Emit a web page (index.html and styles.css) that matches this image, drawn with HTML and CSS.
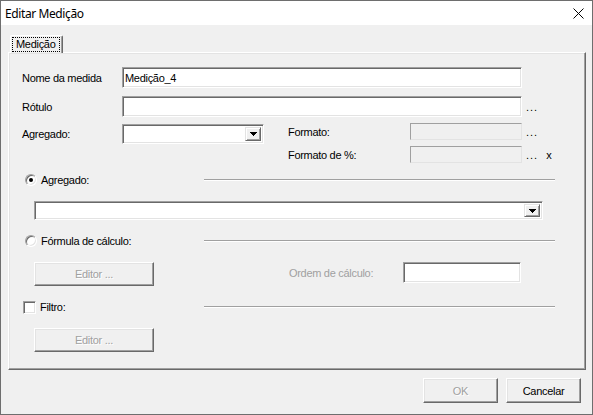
FILE: index.html
```html
<!DOCTYPE html>
<html lang="pt">
<head>
<meta charset="utf-8">
<title>Editar Medição</title>
<link rel="stylesheet" href="styles.css">
</head>
<body>
<div class="window">
  <div class="titlebar">
    <span class="title">Editar Medição</span>
    <svg class="close" width="11" height="11" viewBox="0 0 11 11"><path d="M0.5 0.5L10.5 10.5M10.5 0.5L0.5 10.5" stroke="#000" stroke-width="1" fill="none"/></svg>
  </div>
  <div class="client">
    <div class="tabs"><div class="tab"><span class="focus">Medição</span></div></div>
    <div class="panel">
      <div class="row">
        <span class="lbl">Nome da medida</span>
        <div class="field w-name">Medição_4</div>
      </div>
      <div class="row row-gap8">
        <span class="lbl">Rótulo</span>
        <div class="field w-name"></div>
        <span class="dots">...</span>
      </div>
      <div class="row3">
        <span class="lbl lbl-agg">Agregado:</span>
        <div class="field combo w-agg">
          <span class="arrowbtn"><svg width="7" height="4" viewBox="0 0 7 4"><path d="M0 0h7v1H0zM1 1h5v1H1zM2 2h3v1H2zM3 3h1v1H3z" fill="#000"/></svg></span>
        </div>
        <div class="fmt">
          <div class="fmtrow">
            <span class="flbl">Formato:</span>
            <div class="field dis"></div>
            <span class="dots">...</span>
          </div>
          <div class="fmtrow">
            <span class="flbl">Formato de %:</span>
            <div class="field dis"></div>
            <span class="dots">...</span>
            <span class="xmark">x</span>
          </div>
        </div>
      </div>
      <div class="group group-first">
        <div class="glabel"><span class="radio checked"></span><span>Agregado:</span></div>
        <span class="etch"></span>
      </div>
      <div class="field combo big">
        <span class="arrowbtn"><svg width="7" height="4" viewBox="0 0 7 4"><path d="M0 0h7v1H0zM1 1h5v1H1zM2 2h3v1H2zM3 3h1v1H3z" fill="#000"/></svg></span>
      </div>
      <div class="group">
        <div class="glabel"><span class="radio"></span><span>Fórmula de cálculo:</span></div>
        <span class="etch"></span>
      </div>
      <div class="btnrow">
        <span class="btn btn-editor disabled">Editor ...</span>
        <span class="ordem">Ordem de cálculo:</span>
        <div class="field ordem-in"></div>
      </div>
      <div class="group">
        <div class="glabel"><span class="check"></span><span>Filtro:</span></div>
        <span class="etch"></span>
      </div>
      <div class="btnrow">
        <span class="btn btn-editor disabled">Editor ...</span>
      </div>
    </div>
    <div class="footer">
      <span class="btn btn-dlg disabled">OK</span>
      <span class="btn btn-dlg">Cancelar</span>
    </div>
  </div>
</div>
</body>
</html>
```

FILE: styles.css
```css
* { box-sizing: border-box; }
html, body { margin: 0; padding: 0; }
body {
  font-family: "Liberation Sans", Arial, sans-serif;
  font-size: 11px;
  letter-spacing: -0.3px;
  color: #000;
  background: #f0f0f0;
}
.window {
  width: 593px;
  height: 415px;
  border: 1px solid #6e6e6e;
  background: #f0f0f0;
  display: flex;
  flex-direction: column;
}
.titlebar {
  height: 24px;
  flex: none;
  background: #fff;
  display: flex;
  align-items: center;
  justify-content: space-between;
  padding-left: 4px;
}
.title {
  font-family: "Noto Sans", sans-serif;
  font-size: 12px;
  letter-spacing: -0.4px;
}
.close { margin-right: 8px; display: block; }
.client {
  flex: 1;
  padding: 10px 0 0 7px;
  display: flex;
  flex-direction: column;
}
.tabs { display: flex; height: 17px; }
.tab {
  position: relative;
  z-index: 1;
  margin-left: 2px;
  width: 53px;
  height: 18px;
  background: #f0f0f0;
  border-top: 1px solid #fff;
  border-left: 1px solid #fff;
  border-right: 1px solid #696969;
  box-shadow: inset -1px 0 #a0a0a0;
  border-radius: 2px 2px 0 0;
  padding: 1px 2px 0 1px;
}
.focus {
  display: block;
  height: 15px;
  border: 1px dotted #000;
  line-height: 13px;
  padding-left: 3px;
}
.panel {
  width: 578px;
  height: 318px;
  border: 1px solid;
  border-color: #fff #696969 #696969 #fff;
  box-shadow: inset -1px -1px #a0a0a0, inset 1px 1px #e3e3e3;
  padding: 14px 0 0 13px;
}
.row { display: flex; align-items: center; height: 21px; }
.row-gap8 { margin-top: 8px; }
.lbl { width: 100px; flex: none; }
.field {
  background: #fff;
  border: 1px solid;
  border-color: #a0a0a0 #fff #fff #a0a0a0;
  box-shadow: inset 1px 1px #696969, inset -1px -1px #e3e3e3;
  padding: 0 2px;
  display: flex;
  align-items: center;
  flex: none;
}
.w-name { width: 400px; height: 21px; }
.dots { margin-left: 4px; letter-spacing: 1px; }
.row3 { display: flex; align-items: flex-start; margin-top: 6px; }
.lbl-agg { height: 21px; display: flex; align-items: center; }
.combo { justify-content: flex-end; padding: 2px; }
.w-agg { width: 142px; height: 20px; margin-top: 1px; }
.arrowbtn {
  width: 16px;
  height: 100%;
  background: #f0f0f0;
  border: 1px solid;
  border-color: #e3e3e3 #696969 #696969 #e3e3e3;
  box-shadow: inset 1px 1px #fff, inset -1px -1px #a0a0a0;
  display: flex;
  align-items: center;
  justify-content: center;
}
.arrowbtn svg { display: block; }
.fmt { margin-left: 24px; display: flex; flex-direction: column; gap: 6px; }
.fmtrow { display: flex; align-items: center; height: 17px; }
.flbl { width: 122px; }
.field.dis {
  width: 112px;
  height: 17px;
  background: #f0f0f0;
  border-color: #a0a0a0 #e3e3e3 #e3e3e3 #a0a0a0;
  box-shadow: none;
}
.xmark { margin-left: 8px; }
.group { display: flex; align-items: center; height: 16px; margin-top: 13px; }
.group-first { margin-top: 9px; }
.glabel { width: 182px; display: flex; align-items: center; }
.radio {
  width: 12px;
  height: 12px;
  margin: 0 4px 0 3px;
  border-radius: 50%;
  background: #fff;
  border: 1px solid;
  border-color: #a0a0a0 #fff #fff #a0a0a0;
  box-shadow: inset 1px 1px #696969, inset -1px -1px #e3e3e3;
  display: flex;
  align-items: center;
  justify-content: center;
}
.radio.checked::after {
  content: "";
  width: 4px;
  height: 4px;
  border-radius: 50%;
  background: #000;
}
.check {
  width: 13px;
  height: 13px;
  margin: 0 4px 0 1px;
  background: #fff;
  border: 1px solid;
  border-color: #a0a0a0 #fff #fff #a0a0a0;
  box-shadow: inset 1px 1px #696969, inset -1px -1px #e3e3e3;
}
.etch {
  width: 351px;
  height: 2px;
  border-top: 1px solid #a0a0a0;
  border-bottom: 1px solid #fff;
}
.big { width: 509px; height: 19px; margin: 13px 0 0 12px; }
.btnrow { display: flex; align-items: flex-start; height: 24px; margin-top: 13px; }
.btn {
  display: flex;
  align-items: center;
  justify-content: center;
  background: #f0f0f0;
  border: 1px solid;
  border-color: #fff #696969 #696969 #fff;
  box-shadow: inset -1px -1px #a0a0a0, inset 1px 1px #e3e3e3;
  flex: none;
}
.btn.disabled { color: #a0a0a0; text-shadow: 1px 1px #fff; }
.btn-editor { width: 120px; height: 24px; margin-left: 12px; }
.ordem {
  margin-left: 135px;
  width: 114px;
  height: 21px;
  display: flex;
  align-items: center;
  color: #a0a0a0;
}
.ordem-in { width: 118px; height: 21px; }
.footer {
  display: flex;
  justify-content: flex-end;
  gap: 8px;
  margin-top: 8px;
  padding-right: 11px;
}
.btn-dlg { width: 75px; height: 25px; }
```
